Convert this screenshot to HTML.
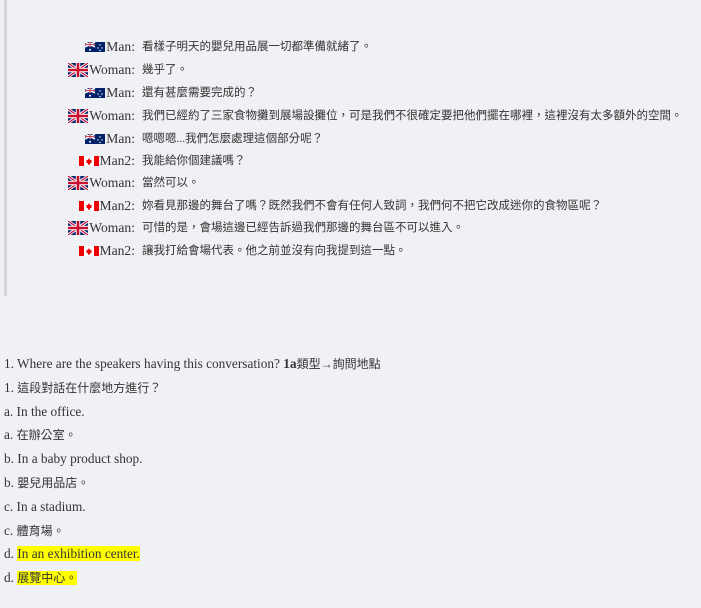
<!DOCTYPE html>
<html><head><meta charset="utf-8"><style>
body{margin:0;background:#f0f1f5;width:701px;height:608px;overflow:hidden;font-family:"Liberation Serif","Noto Sans CJK TC",serif;color:#333;font-size:13.3px}
.bq{position:absolute;left:4px;top:0;width:3px;height:296px;background:#d4d5d9}
.row{position:absolute;left:0;height:20px;line-height:20px;white-space:nowrap}
.txt{position:absolute;left:142px;font-size:11.5px}
.labw{position:absolute;left:0;width:135px;text-align:right;font-size:13.6px}
.f{display:inline-block;vertical-align:middle;margin-right:1px;position:relative;top:-1px}
.q{position:absolute;left:4px;line-height:20px;white-space:nowrap}
.hl{background:#ffff00}
.cj{font-size:12px}
</style></head><body>
<div class="bq"></div>
<svg width="0" height="0" style="position:absolute"><defs>
<g id="au"><rect width="20" height="10" fill="#012169"/><path d="M0 0L10 5M10 0L0 5" stroke="#fff" stroke-width="1.5"/><path d="M5 0V5M0 2.5H10" stroke="#fff" stroke-width="1.6"/><path d="M5 0V5M0 2.5H10" stroke="#c8102e" stroke-width="0.8"/><circle cx="5" cy="7.8" r="1" fill="#fff"/><circle cx="15" cy="3" r=".7" fill="#fff"/><circle cx="13" cy="6" r=".7" fill="#fff"/><circle cx="17" cy="6" r=".7" fill="#fff"/><circle cx="15" cy="8.5" r=".7" fill="#fff"/></g>
<g id="uk"><rect width="20" height="14" fill="#012169"/><path d="M0 0L20 14M20 0L0 14" stroke="#fff" stroke-width="3"/><path d="M0 0L20 14M20 0L0 14" stroke="#c8102e" stroke-width="1.2"/><path d="M10 0V14M0 7H20" stroke="#fff" stroke-width="4.5"/><path d="M10 0V14M0 7H20" stroke="#c8102e" stroke-width="2.6"/></g>
<g id="ca"><rect width="20" height="10" fill="#fff"/><rect width="5" height="10" fill="#e00"/><rect x="15" width="5" height="10" fill="#e00"/><path d="M10 2L11.2 4.2L12.8 3.6L12.2 6.2L13 6.6L11 7.4V8.6H9V7.4L7 6.6L7.8 6.2L7.2 3.6L8.8 4.2Z" fill="#e00"/></g>
</defs></svg>
<div class="row" style="top:37px;width:701px"><span class="labw"><svg class="f" width="20" height="10"><use href="#au"/></svg>Man:</span><span class="txt">看樣子明天的嬰兒用品展一切都準備就緒了。</span></div>
<div class="row" style="top:60px;width:701px"><span class="labw"><svg class="f" width="20" height="14"><use href="#uk"/></svg>Woman:</span><span class="txt">幾乎了。</span></div>
<div class="row" style="top:83px;width:701px"><span class="labw"><svg class="f" width="20" height="10"><use href="#au"/></svg>Man:</span><span class="txt">還有甚麼需要完成的？</span></div>
<div class="row" style="top:106px;width:701px"><span class="labw"><svg class="f" width="20" height="14"><use href="#uk"/></svg>Woman:</span><span class="txt">我們已經約了三家食物攤到展場設攤位，可是我們不很確定要把他們擺在哪裡，這裡沒有太多額外的空間。</span></div>
<div class="row" style="top:129px;width:701px"><span class="labw"><svg class="f" width="20" height="10"><use href="#au"/></svg>Man:</span><span class="txt">嗯嗯嗯...我們怎麼處理這個部分呢？</span></div>
<div class="row" style="top:151px;width:701px"><span class="labw"><svg class="f" width="20" height="10"><use href="#ca"/></svg>Man2:</span><span class="txt">我能給你個建議嗎？</span></div>
<div class="row" style="top:173px;width:701px"><span class="labw"><svg class="f" width="20" height="14"><use href="#uk"/></svg>Woman:</span><span class="txt">當然可以。</span></div>
<div class="row" style="top:196px;width:701px"><span class="labw"><svg class="f" width="20" height="10"><use href="#ca"/></svg>Man2:</span><span class="txt">妳看見那邊的舞台了嗎？既然我們不會有任何人致詞，我們何不把它改成迷你的食物區呢？</span></div>
<div class="row" style="top:218px;width:701px"><span class="labw"><svg class="f" width="20" height="14"><use href="#uk"/></svg>Woman:</span><span class="txt">可惜的是，會場這邊已經告訴過我們那邊的舞台區不可以進入。</span></div>
<div class="row" style="top:241px;width:701px"><span class="labw"><svg class="f" width="20" height="10"><use href="#ca"/></svg>Man2:</span><span class="txt">讓我打給會場代表。他之前並沒有向我提到這一點。</span></div>

<div class="q" style="top:354px">1. Where are the speakers having this conversation? <b>1a</b><span class="cj">類型→詢問地點</span></div>
<div class="q" style="top:378px">1. <span class="cj">這段對話在什麼地方進行？</span></div>
<div class="q" style="top:402px">a. In the office.</div>
<div class="q" style="top:425px">a. <span class="cj">在辦公室。</span></div>
<div class="q" style="top:449px">b. In a baby product shop.</div>
<div class="q" style="top:473px">b. <span class="cj">嬰兒用品店。</span></div>
<div class="q" style="top:497px">c. In a stadium.</div>
<div class="q" style="top:521px">c. <span class="cj">體育場。</span></div>
<div class="q" style="top:544px">d. <span class="hl">In an exhibition center.</span></div>
<div class="q" style="top:568px">d. <span class="hl cj">展覽中心。</span></div>
</body></html>
